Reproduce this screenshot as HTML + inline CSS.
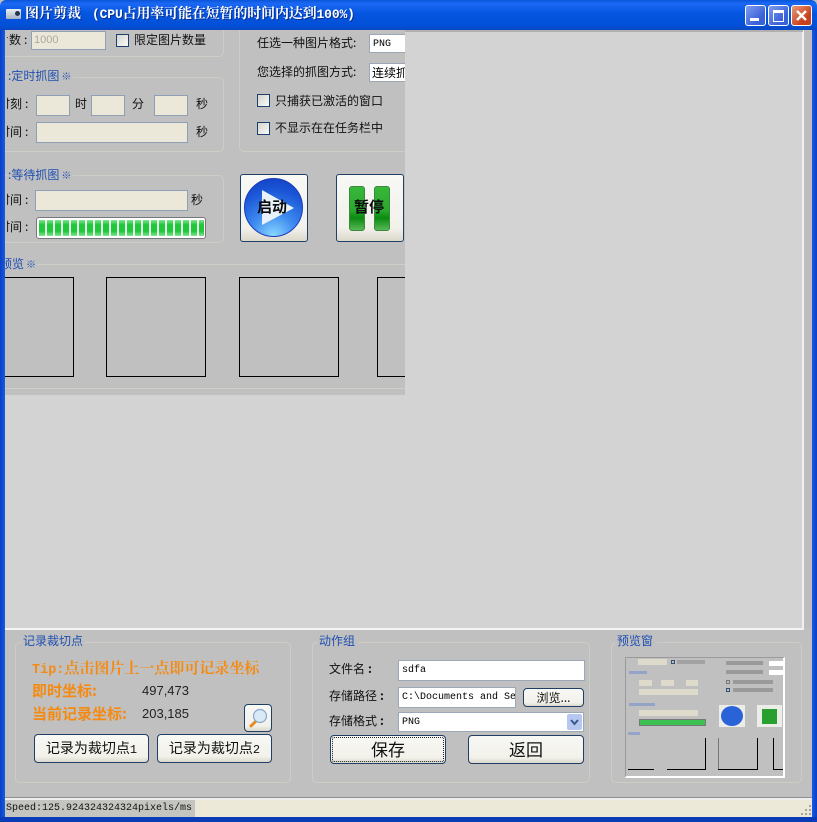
<!DOCTYPE html>
<html><head><meta charset="utf-8"><style>
html,body{margin:0;padding:0;background:#c0c0c0}
#w{position:relative;width:817px;height:822px;overflow:hidden;background:#c0c0c0;font:12px "Liberation Sans","Noto Sans CJK SC",sans-serif;color:#111}
#w div{position:absolute;box-sizing:border-box;white-space:nowrap}
.t{line-height:14px;height:14px}
.blue{color:#1f4fb0}
.s{font-family:"WenQuanYi Zen Hei","Noto Sans CJK SC",sans-serif;font-size:12px}
.c{margin-left:3px}
.k{font-size:10px;margin-left:2px}
.gb{border:1px solid #cdcdc5;border-radius:5px}
.in{background:#ebe8da;border:1px solid #8fa0b4}
.wh{background:#fff;border:1px solid #9aa8b8;font:10px "Liberation Mono","Noto Sans CJK SC",monospace;padding:4px 0 0 3px;overflow:hidden;color:#000}
.cb{width:13px;height:13px;border:1px solid #1c3f6e;background:linear-gradient(135deg,#d4d4cc,#fafafa)}
.btn{border:1px solid #1f3f66;border-radius:3px;background:linear-gradient(#f8f8f5,#f2f1ea 80%,#dcd8cc);text-align:center;font-family:"WenQuanYi Zen Hei","Noto Sans CJK SC",sans-serif;color:#111}
.pv{border:1px solid #000;background:#c0c0c0}
.or{color:#f58a12;font-weight:bold;font-family:"Noto Serif CJK SC",serif;font-size:15px;line-height:18px}
.or2{color:#f58a12;font-weight:bold;font-family:"Noto Sans CJK SC",sans-serif;font-size:15px;line-height:18px}
.bar{background:linear-gradient(#38b83a,#2aa82e 55%,#0a8a10 72%,#58b858);border:1px solid #3b8a3b;border-radius:3px}
.ttl{color:#fff;font:bold 14px/18px "Liberation Mono","Noto Serif CJK SC",serif;text-shadow:1px 1px 0 #0a2f90}
.ttl span{font-size:13px}
.m{width:2px;height:14px;left:0;background:#c0c0c0}
</style></head><body><div id="w">
<div style="left:0;top:0;width:817px;height:30px;background:linear-gradient(#0a55d8,#1a68f4 12%,#0455e0 45%,#0350d8 85%,#0a48c0);border-radius:6px 6px 0 0"></div>
<div style="left:0;top:30px;width:5px;height:792px;background:linear-gradient(90deg,#0a3fc0,#1a5ae8)"></div>
<div style="left:812px;top:30px;width:5px;height:792px;background:linear-gradient(90deg,#1a5ae8,#0a3fc0)"></div>
<div style="left:0;top:817px;width:817px;height:5px;background:#0a3cb8"></div>

<div style="left:6px;top:9px;width:15px;height:10px;background:linear-gradient(#e8eef6,#a8b4c4);border-radius:1px"></div>
<div style="left:15px;top:11px;width:5px;height:5px;background:#26364a;border-radius:50%"></div>
<div class="ttl" style="left:25px;top:6px">图片剪裁</div>
<div class="ttl" style="left:92px;top:6px;letter-spacing:-.15px"><span>(CPU</span>占用率可能在短暂的时间内达到<span>100%)</span></div>

<div style="left:745px;top:5px;width:21px;height:21px;border:1px solid #fff;border-radius:3px;background:linear-gradient(135deg,#7f9cf0,#3a62d8 70%)"></div>
<div style="left:750px;top:18px;width:9px;height:3px;background:#fff"></div>
<div style="left:768px;top:5px;width:21px;height:21px;border:1px solid #fff;border-radius:3px;background:linear-gradient(135deg,#7f9cf0,#3a62d8 70%)"></div>
<div style="left:773px;top:10px;width:11px;height:12px;border:1px solid #fff;border-top:3px solid #fff"></div>
<div style="left:791px;top:5px;width:21px;height:21px;border:1px solid #fff;border-radius:3px;background:linear-gradient(135deg,#ea9a78,#c8401c 70%)"></div>
<svg style="position:absolute;left:791px;top:5px" width="21" height="21"><path d="M6 6L15 15M15 6L6 15" stroke="#fff" stroke-width="2.4"/></svg>

<div style="left:5px;top:30px;width:798px;height:598px;background:#d3d3d3"></div>
<div style="left:803px;top:30px;width:9px;height:598px;background:#bdbdbd"></div>
<div style="left:5px;top:628px;width:798px;height:2px;background:#f4f4f4"></div>
<div style="left:802px;top:30px;width:2px;height:600px;background:#f0f0f0"></div>
<div style="left:5px;top:30px;width:798px;height:2px;background:#b0b0b0"></div>

<div style="left:5px;top:30px;width:400px;height:365px;background:#c0c0c0;overflow:hidden">
 <div class="gb" style="left:-20px;top:-20px;width:239px;height:47px"></div>
 <div class="s t" style="left:-8px;top:3px">片数<span class="c">:</span></div>
 <div class="m" style="top:3px"></div>
 <div class="in" style="left:26px;top:1px;width:75px;height:19px;color:#a9a9a0;font-size:11px;padding:1px 0 0 2px;line-height:14px">1000</div>
 <div class="cb" style="left:111px;top:4px"></div>
 <div class="s t" style="left:129px;top:3px">限定图片数量</div>

 <div class="gb" style="left:-20px;top:47px;width:239px;height:75px"></div>
 <div style="left:2px;top:38px;width:66px;height:14px;background:#c0c0c0"></div>
 <div class="s t blue" style="left:3px;top:39px">:定时抓图<span class="k">※</span></div>
 <div class="s t" style="left:-7px;top:67px">时刻<span class="c">:</span></div>
 <div class="m" style="top:67px"></div>
 <div class="in" style="left:31px;top:65px;width:34px;height:21px"></div>
 <div class="s t" style="left:70px;top:67px">时</div>
 <div class="in" style="left:86px;top:65px;width:34px;height:21px"></div>
 <div class="s t" style="left:127px;top:67px">分</div>
 <div class="in" style="left:149px;top:65px;width:34px;height:21px"></div>
 <div class="s t" style="left:191px;top:67px">秒</div>
 <div class="s t" style="left:-7px;top:95px">时间<span class="c">:</span></div>
 <div class="m" style="top:95px"></div>
 <div class="in" style="left:31px;top:92px;width:152px;height:21px"></div>
 <div class="s t" style="left:191px;top:95px">秒</div>

 <div class="gb" style="left:234px;top:-20px;width:200px;height:142px"></div>
 <div class="s t" style="left:252px;top:6px">任选一种图片格式:</div>
 <div class="wh" style="left:364px;top:4px;width:40px;height:19px;border-right:0">PNG</div>
 <div class="s t" style="left:252px;top:35px">您选择的抓图方式:</div>
 <div class="wh" style="left:364px;top:33px;width:40px;height:19px;border-right:0;font:12px 'WenQuanYi Zen Hei','Noto Sans CJK SC',sans-serif;line-height:14px;padding:2px 0 0 2px">连续抓</div>
 <div class="cb" style="left:252px;top:64px"></div>
 <div class="s t" style="left:270px;top:64px">只捕获已激活的窗口</div>
 <div class="cb" style="left:252px;top:92px"></div>
 <div class="s t" style="left:270px;top:91px">不显示在在任务栏中</div>

 <div class="gb" style="left:-20px;top:145px;width:239px;height:68px"></div>
 <div style="left:2px;top:137px;width:66px;height:14px;background:#c0c0c0"></div>
 <div class="s t blue" style="left:3px;top:138px">:等待抓图<span class="k">※</span></div>
 <div class="s t" style="left:-7px;top:163px">时间<span class="c">:</span></div>
 <div class="m" style="top:163px"></div>
 <div class="in" style="left:30px;top:160px;width:153px;height:21px"></div>
 <div class="s t" style="left:186px;top:163px">秒</div>
 <div class="s t" style="left:-7px;top:190px">时间<span class="c">:</span></div>
 <div class="m" style="top:190px"></div>
 <div style="left:31px;top:187px;width:170px;height:22px;border:1px solid #777;border-radius:3px;background:#fff;overflow:hidden">
  <div style="left:2px;top:2px;width:165px;height:16px;background:repeating-linear-gradient(90deg,#1fc83a 0,#1fc83a 6px,#e6f6e8 6px,#e6f6e8 8px)"></div>
  <div style="left:2px;top:2px;width:165px;height:16px;background:linear-gradient(rgba(255,255,255,.45),rgba(255,255,255,0) 30%,rgba(255,255,255,0) 70%,rgba(255,255,255,.45))"></div>
 </div>

 <div class="btn" style="left:235px;top:144px;width:68px;height:68px"></div>
 <div style="left:239px;top:148px;width:59px;height:59px;border-radius:50%;background:radial-gradient(circle at 50% 100%,#8ad8ff 0,#3f8cf0 35%,#1c58d8 70%,#0f3cc0);border:1px solid #1a3cbc"></div>
 <svg style="position:absolute;left:239px;top:148px" width="59" height="59"><path d="M18 12L18 47L50 30Z" fill="#e8f2fb"/></svg>
 <div class="s" style="left:252px;top:167px;font-size:15px;font-weight:bold;line-height:20px;color:#0b0b0b;font-family:'Noto Sans CJK SC',sans-serif">启动</div>
 <div class="btn" style="left:331px;top:144px;width:68px;height:68px"></div>
 <div class="bar" style="left:344px;top:156px;width:16px;height:45px"></div>
 <div class="bar" style="left:369px;top:156px;width:16px;height:45px"></div>
 <div class="s" style="left:349px;top:167px;font-size:15px;font-weight:bold;line-height:20px;color:#0b0b0b;font-family:'Noto Sans CJK SC',sans-serif">暂停</div>

 <div style="left:0;top:234px;width:400px;height:1px;background:#cfcfc8"></div>
 <div style="left:0;top:226px;width:32px;height:14px;background:#c0c0c0"></div>
 <div class="s t blue" style="left:-5px;top:227px">预览<span class="k">※</span></div>
 <div class="pv" style="left:-20px;top:247px;width:89px;height:100px"></div>
 <div class="pv" style="left:101px;top:247px;width:100px;height:100px"></div>
 <div class="pv" style="left:234px;top:247px;width:100px;height:100px"></div>
 <div class="pv" style="left:372px;top:247px;width:60px;height:100px"></div>
 <div style="left:0;top:358px;width:400px;height:1px;background:#cfcfc8"></div>
</div>

<!-- bottom groups -->
<div class="gb" style="left:15px;top:642px;width:276px;height:141px"></div>
<div style="left:21px;top:634px;width:64px;height:14px;background:#c0c0c0"></div>
<div class="s t blue" style="left:23px;top:634px">记录裁切点</div>
<div class="or" style="left:32px;top:659px"><span style="font:bold 13.5px 'Liberation Mono',monospace">Tip:</span>点击图片上一点即可记录坐标</div>
<div class="or2" style="left:32px;top:682px">即时坐标:</div>
<div class="t" style="left:142px;top:684px;font-size:13px;color:#222">497,473</div>
<div class="or2" style="left:32px;top:705px">当前记录坐标:</div>
<div class="t" style="left:142px;top:707px;font-size:13px;color:#222">203,185</div>
<div class="btn" style="left:244px;top:704px;width:28px;height:28px;border-radius:4px"></div>
<svg style="position:absolute;left:244px;top:704px" width="28" height="28"><path d="M7 22L12 17" stroke="#e88a20" stroke-width="3" stroke-linecap="round"/><circle cx="16" cy="12" r="6.5" fill="#d8eaf8" stroke="#8aa8c8" stroke-width="1.2"/></svg>
<div class="btn" style="left:34px;top:734px;width:115px;height:29px;font-size:14px;line-height:26px;border-radius:4px">记录为裁切点<span style="font:12px 'Liberation Mono',monospace">1</span></div>
<div class="btn" style="left:157px;top:734px;width:115px;height:29px;font-size:14px;line-height:26px;border-radius:4px">记录为裁切点<span style="font:12px 'Liberation Mono',monospace">2</span></div>

<div class="gb" style="left:312px;top:642px;width:278px;height:141px"></div>
<div style="left:317px;top:634px;width:42px;height:14px;background:#c0c0c0"></div>
<div class="s t blue" style="left:319px;top:634px">动作组</div>
<div class="s t" style="left:329px;top:662px">文件名<span class="c" style="font-weight:bold">:</span></div>
<div class="wh" style="left:398px;top:660px;width:187px;height:21px">sdfa</div>
<div class="s t" style="left:329px;top:689px">存储路径<span class="c" style="font-weight:bold">:</span></div>
<div class="wh" style="left:398px;top:687px;width:118px;height:21px">C:\Documents and Se</div>
<div class="btn" style="left:523px;top:688px;width:61px;height:19px;font-size:12px;line-height:17px;border-radius:4px">浏览...</div>
<div class="s t" style="left:329px;top:714px">存储格式<span class="c" style="font-weight:bold">:</span></div>
<div class="wh" style="left:398px;top:712px;width:186px;height:20px;padding-top:4px">PNG</div>
<div style="left:567px;top:714px;width:15px;height:16px;background:#b6c8f0;border-radius:2px"></div>
<svg style="position:absolute;left:567px;top:714px" width="15" height="16"><path d="M4 6L7.5 10L11 6" fill="none" stroke="#3a5a90" stroke-width="2"/></svg>
<div class="btn" style="left:330px;top:735px;width:116px;height:29px;font-size:17px;line-height:26px;outline:1px dotted #222;outline-offset:-3px;border-radius:4px">保存</div>
<div class="btn" style="left:468px;top:735px;width:116px;height:29px;font-size:17px;line-height:26px;border-radius:4px">返回</div>

<div class="gb" style="left:611px;top:642px;width:191px;height:141px"></div>
<div style="left:615px;top:634px;width:42px;height:14px;background:#c0c0c0"></div>
<div class="s t blue" style="left:617px;top:634px">预览窗</div>
<div style="left:625px;top:657px;width:160px;height:121px;background:#c0c0c0;border:1px solid #9a9a9a;border-right:2px solid #fff;border-bottom:2px solid #fff;overflow:hidden">
 <div style="left:12px;top:1px;width:29px;height:6px;background:#dedbcd"></div>
 <div style="left:45px;top:2px;width:4px;height:4px;border:1px solid #33507a"></div>
 <div style="left:51px;top:2px;width:28px;height:4px;background:#a2a2a2"></div>
 <div style="left:100px;top:3px;width:37px;height:4px;background:#9a9a9a"></div>
 <div style="left:143px;top:3px;width:14px;height:5px;background:#fff"></div>
 <div style="left:100px;top:12px;width:37px;height:4px;background:#9a9a9a"></div>
 <div style="left:143px;top:12px;width:14px;height:5px;background:#fff"></div>
 <div style="left:3px;top:13px;width:18px;height:3px;background:#93a4c8"></div>
 <div style="left:13px;top:22px;width:13px;height:6px;background:#dedbcd"></div>
 <div style="left:35px;top:22px;width:13px;height:6px;background:#dedbcd"></div>
 <div style="left:60px;top:22px;width:12px;height:6px;background:#dedbcd"></div>
 <div style="left:13px;top:31px;width:59px;height:6px;background:#dedbcd"></div>
 <div style="left:100px;top:22px;width:4px;height:4px;border:1px solid #777"></div>
 <div style="left:107px;top:22px;width:40px;height:4px;background:#9a9a9a"></div>
 <div style="left:100px;top:30px;width:4px;height:4px;border:1px solid #33507a"></div>
 <div style="left:107px;top:30px;width:40px;height:4px;background:#9a9a9a"></div>
 <div style="left:3px;top:45px;width:26px;height:3px;background:#93a4c8"></div>
 <div style="left:13px;top:52px;width:59px;height:6px;background:#dedbcd"></div>
 <div style="left:13px;top:61px;width:67px;height:7px;background:#3cc050;border:1px solid #777"></div>
 <div style="left:93px;top:47px;width:26px;height:22px;background:#ecece8"></div>
 <div style="left:95px;top:48px;width:22px;height:20px;border-radius:50%;background:#2a62d8"></div>
 <div style="left:131px;top:47px;width:25px;height:22px;background:#ecece8"></div>
 <div style="left:136px;top:51px;width:15px;height:15px;background:#28a030"></div>
 <div style="left:2px;top:74px;width:12px;height:3px;background:#93a4c8"></div>
 <div style="left:2px;top:111px;width:26px;height:1px;background:#000"></div>
 <div style="left:41px;top:111px;width:38px;height:1px;background:#000"></div>
 <div style="left:79px;top:80px;width:1px;height:32px;background:#000"></div>
 <div style="left:92px;top:80px;width:1px;height:32px;background:#777"></div>
 <div style="left:92px;top:111px;width:39px;height:1px;background:#000"></div>
 <div style="left:131px;top:80px;width:1px;height:32px;background:#000"></div>
 <div style="left:147px;top:80px;width:1px;height:32px;background:#000"></div>
 <div style="left:147px;top:111px;width:11px;height:1px;background:#000"></div>
</div>

<!-- status -->
<div style="left:5px;top:797px;width:807px;height:1px;background:#8f8f8f"></div>
<div style="left:5px;top:798px;width:807px;height:2px;background:#eeeeee"></div>
<div style="left:5px;top:800px;width:807px;height:17px;background:#ece9d8"></div>
<div style="left:5px;top:800px;width:190px;height:17px;background:#c4c4c0;font:10px/17px 'Liberation Mono',monospace;padding-left:1px;color:#111">Speed:125.924324324324pixels/ms</div>
<svg style="position:absolute;left:800px;top:804px" width="12" height="12"><path d="M9 1h2v2H9zM5 5h2v2H5zM9 5h2v2H9zM1 9h2v2H1zM5 9h2v2H5zM9 9h2v2H9z" fill="#a8a698"/></svg>
</div></body></html>
